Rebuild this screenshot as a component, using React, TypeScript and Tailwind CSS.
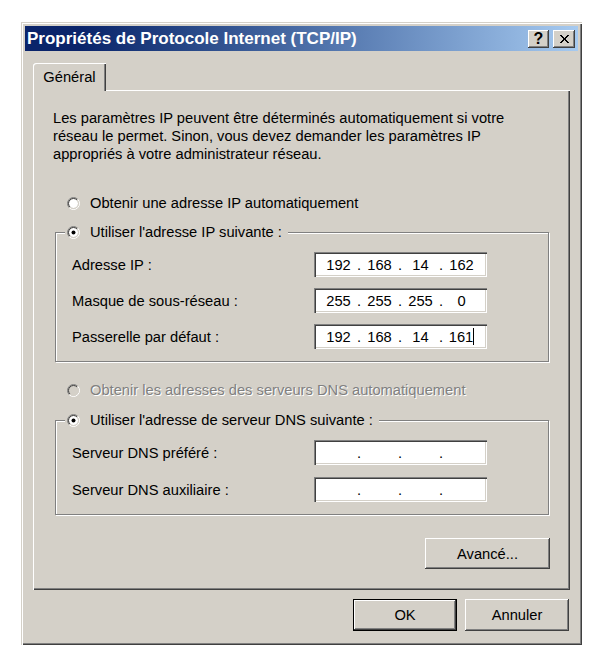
import React from 'react';

const raised =
  'shadow-[inset_-1px_-1px_0_#404040,inset_1px_1px_0_#fff,inset_-2px_-2px_0_#808080,inset_2px_2px_0_#d4d0c8]';
const sunken =
  'shadow-[inset_1px_1px_0_#808080,inset_2px_2px_0_#404040,inset_-1px_-1px_0_#fff,inset_-2px_-2px_0_#d4d0c8]';
const etched = 'border border-[#808080] shadow-[inset_1px_1px_0_#fff,1px_1px_0_#fff]';

const Radio: React.FC<{ checked?: boolean; disabled?: boolean }> = ({ checked, disabled }) => (
  <svg width="13" height="13" viewBox="0 0 13 13" className="shrink-0">
    <circle cx="6.5" cy="6.5" r="4.5" fill={disabled ? '#d4d0c8' : '#fff'} />
    <path d="M2.257 10.743 A6 6 0 0 1 10.743 2.257" fill="none" stroke="#808080" strokeWidth="1" />
    <path d="M10.743 2.257 A6 6 0 0 1 2.257 10.743" fill="none" stroke="#fff" strokeWidth="1" />
    <path d="M2.964 10.036 A5 5 0 0 1 10.036 2.964" fill="none" stroke="#404040" strokeWidth="1" />
    <path d="M10.036 2.964 A5 5 0 0 1 2.964 10.036" fill="none" stroke="#d4d0c8" strokeWidth="1" />
    {checked && <circle cx="6.5" cy="6.5" r="2" fill="#000" />}
  </svg>
);

const IpField: React.FC<{ parts: string[]; caret?: boolean }> = ({ parts, caret }) => (
  <div className={`w-[173px] h-[25px] bg-white ${sunken} flex items-center pl-[7px]`}>
    {parts.map((p, i) => (
      <React.Fragment key={i}>
        {i > 0 && <span className="w-[6px] text-center">.</span>}
        <span className="w-[35px] text-center">
          {p}
          {caret && i === 3 && <span className="inline-block w-px h-[17px] bg-black align-middle -mt-[2px]" />}
        </span>
      </React.Fragment>
    ))}
  </div>
);

const Row: React.FC<{ label: string; parts: string[]; caret?: boolean }> = ({ label, parts, caret }) => (
  <div className="flex items-center h-[25px]">
    <span className="w-[242px]">{label}</span>
    <IpField parts={parts} caret={caret} />
  </div>
);

const GroupHeader: React.FC<{ label: string }> = ({ label }) => (
  <div className="-mt-[10px] ml-[9px] w-fit pl-[2px] pr-[6px] bg-[#d4d0c8] h-[18px] flex items-center gap-[10px]">
    <Radio checked />
    <span>{label}</span>
  </div>
);

const App: React.FC = () => {
  const empty = ['', '', '', ''];

  return (
    <div className="w-[607px] h-[660px] bg-white pl-[21px] pt-[22px] font-['Liberation_Sans',Arial,sans-serif] text-[14.7px] leading-[18px] text-black">
      <div className={`w-[561px] h-[623px] bg-[#d4d0c8] p-[4px] shadow-[inset_1px_1px_0_#d4d0c8,inset_2px_2px_0_#fff,inset_-1px_-1px_0_#404040,inset_-2px_-2px_0_#808080] flex flex-col`}>
        {/* title bar */}
        <div className="h-[25px] flex items-center justify-between pl-[2px] pr-[3px] bg-linear-to-r from-[#0a246a] from-10% to-[#a6caf0]">
          <span className="text-white font-bold text-[17px] leading-none">Propriétés de Protocole Internet (TCP/IP)</span>
          <div className="flex items-center gap-[4px]">
            <div className={`w-[21px] h-[18px] bg-[#d4d0c8] ${raised} flex items-center justify-center font-bold text-[16px] leading-none`}>?</div>
            <div className={`w-[22px] h-[18px] bg-[#d4d0c8] ${raised} flex items-center justify-center`}>
              <svg width="11" height="10" viewBox="0 0 11 10" shapeRendering="crispEdges">
                <path d="M1 1 L9 9 M2 1 L10 9 M9 1 L1 9 M10 1 L2 9" stroke="#000" strokeWidth="1.2" fill="none" />
              </svg>
            </div>
          </div>
        </div>

        <div className="px-[8px] pt-[12px]">
          {/* tab */}
          <div className="flex">
            <div className="relative z-10 -mb-px h-[28px] w-[73px] bg-[#d4d0c8] rounded-tl-[3px] shadow-[inset_1px_1px_0_#fff,inset_-1px_0_0_#404040,inset_-2px_0_0_#808080] flex items-center justify-center">
              Général
            </div>
          </div>

          {/* panel */}
          <div className="bg-[#d4d0c8] shadow-[inset_1px_1px_0_#fff,inset_-1px_-1px_0_#404040,inset_-2px_-2px_0_#808080] pl-[20px] pt-[19px] pb-[21px]">
            <p>
              Les paramètres IP peuvent être déterminés automatiquement si votre
              <br />
              réseau le permet. Sinon, vous devez demander les paramètres IP
              <br />
              appropriés à votre administrateur réseau.
            </p>

            <div className="mt-[31px] ml-[14px] h-[18px] flex items-center gap-[10px]">
              <Radio />
              <span>Obtenir une adresse IP automatiquement</span>
            </div>

            <div className={`mt-[20px] ml-[2px] w-[494px] ${etched} pb-[12px]`}>
              <GroupHeader label="Utiliser l'adresse IP suivante :" />
              <div className="mt-[11px] pl-[16px] flex flex-col gap-[11px]">
                <Row label="Adresse IP :" parts={['192', '168', '14', '162']} />
                <Row label="Masque de sous-réseau :" parts={['255', '255', '255', '0']} />
                <Row label="Passerelle par défaut :" parts={['192', '168', '14', '161']} caret />
              </div>
            </div>

            <div className="mt-[19px] ml-[14px] h-[18px] flex items-center gap-[10px]">
              <Radio disabled />
              <span className="text-[#808080] [text-shadow:1px_1px_0_#fff]">Obtenir les adresses des serveurs DNS automatiquement</span>
            </div>

            <div className={`mt-[21px] ml-[2px] w-[494px] ${etched} pb-[12px]`}>
              <GroupHeader label="Utiliser l'adresse de serveur DNS suivante :" />
              <div className="mt-[11px] pl-[16px] flex flex-col gap-[12px]">
                <Row label="Serveur DNS préféré :" parts={empty} />
                <Row label="Serveur DNS auxiliaire :" parts={empty} />
              </div>
            </div>

            <div className="mt-[23px] ml-[2px] w-[495px] flex justify-end">
              <button className={`w-[125px] h-[31px] bg-[#d4d0c8] ${raised} flex items-center justify-center`}>Avancé...</button>
            </div>
          </div>

          {/* dialog buttons */}
          <div className="mt-[9px] pr-[1px] flex justify-end gap-[8px]">
            <button className="w-[104px] h-[32px] bg-[#d4d0c8] border border-black shadow-[inset_-1px_-1px_0_#404040,inset_1px_1px_0_#fff,inset_-2px_-2px_0_#808080] flex items-center justify-center">
              OK
            </button>
            <button className={`w-[104px] h-[32px] bg-[#d4d0c8] ${raised} flex items-center justify-center`}>Annuler</button>
          </div>
        </div>
      </div>
    </div>
  );
};

export default App;
